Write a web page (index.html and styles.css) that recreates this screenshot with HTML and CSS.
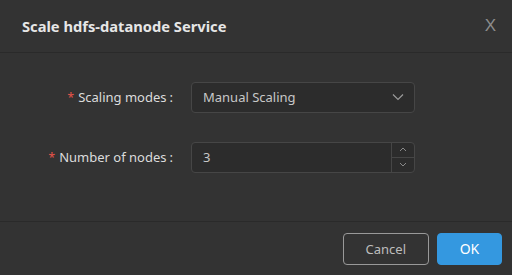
FILE: index.html
```html
<!DOCTYPE html>
<html lang="en">
<head>
    <meta charset="UTF-8">
    <title>Scale Service</title>
    <link rel="stylesheet" href="styles.css">
</head>
<body>

<div class="modal">
    <div class="modal-header">
        <h2>Scale hdfs-datanode Service</h2>
        <span class="close">X</span>
    </div>

    <div class="modal-body">
        <!-- scaling mode -->
        <div class="form-row">
            <label class="required">Scaling modes</label>
            <div class="select">
                <span>Manual Scaling</span>
                <svg width="12" height="8" viewBox="0 0 12 8"><path d="M1 1.5 L6 6.5 L11 1.5" fill="none" stroke="#9a9a9a" stroke-width="1.2"/></svg>
            </div>
        </div>

        <!-- node count -->
        <div class="form-row">
            <label class="required">Number of nodes</label>
            <div class="number-input">
                <span class="value">3</span>
                <div class="spinner">
                    <div class="step"><svg width="8" height="5" viewBox="0 0 8 5"><path d="M1 4 L4 1 L7 4" fill="none" stroke="#8a8a8a" stroke-width="1"/></svg></div>
                    <div class="step"><svg width="8" height="5" viewBox="0 0 8 5"><path d="M1 1 L4 4 L7 1" fill="none" stroke="#8a8a8a" stroke-width="1"/></svg></div>
                </div>
            </div>
        </div>
    </div>

    <div class="modal-footer">
        <button class="btn">Cancel</button>
        <button class="btn btn-primary">OK</button>
    </div>
</div>

</body>
</html>
```

FILE: styles.css
```css
body {
    margin: 0;
    padding: 0;
    background-color: #333333;
    font-family: "Noto Sans", "Open Sans", sans-serif;
    color: #d9d9d9;
}

.modal {
    width: 512px;
    height: 275px;
    display: flex;
    flex-direction: column;
}

.modal-header {
    height: 53px;
    display: flex;
    align-items: center;
    justify-content: space-between;
    padding: 0 16px 0 22px;
    border-bottom: 1px solid #2a2a2a;
    box-sizing: border-box;
}

.modal-header h2 {
    margin: 0;
    font-size: 14.7px;
    font-weight: 700;
    color: #e6e6e6;
}

.close {
    font-size: 17px;
    color: #8c8c8c;
    font-family: "Liberation Sans", sans-serif;
}

.modal-body {
    flex: 1;
    padding-top: 28px;
    border-bottom: 1px solid #2a2a2a;
}

.form-row {
    display: flex;
    align-items: center;
    height: 32px;
    margin-bottom: 28px;
}

.form-row label {
    width: 173px;
    text-align: right;
    font-size: 13px;
    color: #dcdcdc;
    padding-right: 18px;
}

.form-row label::after {
    content: ":";
    margin-left: 3px;
}

.required::before {
    content: "*";
    color: #e8534a;
    margin-right: 4px;
    font-size: 12px;
}

.select,
.number-input {
    width: 224px;
    height: 31px;
    box-sizing: border-box;
    border: 1px solid #464646;
    border-radius: 4px;
    background-color: #2c2c2c;
    font-size: 13px;
    color: #c8c8c8;
    display: flex;
    align-items: center;
}

.select {
    justify-content: space-between;
    padding: 0 10px 0 11px;
}

.number-input .value {
    flex: 1;
    padding-left: 11px;
}

.spinner {
    width: 22px;
    height: 100%;
    border-left: 1px solid #464646;
    display: flex;
    flex-direction: column;
}

.step {
    flex: 1;
    display: flex;
    align-items: center;
    justify-content: center;
}

.step + .step {
    border-top: 1px solid #464646;
}

.modal-footer {
    height: 53px;
    display: flex;
    align-items: center;
    justify-content: flex-end;
    gap: 8px;
    padding-right: 10px;
}

.btn {
    height: 32px;
    padding: 0 22px;
    font-family: inherit;
    font-size: 13px;
    color: #bdbdbd;
    background-color: transparent;
    border: 1px solid #999999;
    border-radius: 4px;
    cursor: pointer;
}

.btn-primary {
    width: 65px;
    padding: 0;
    font-size: 14px;
    color: #ffffff;
    background-color: #3498e0;
    border-color: #3498e0;
}
```
